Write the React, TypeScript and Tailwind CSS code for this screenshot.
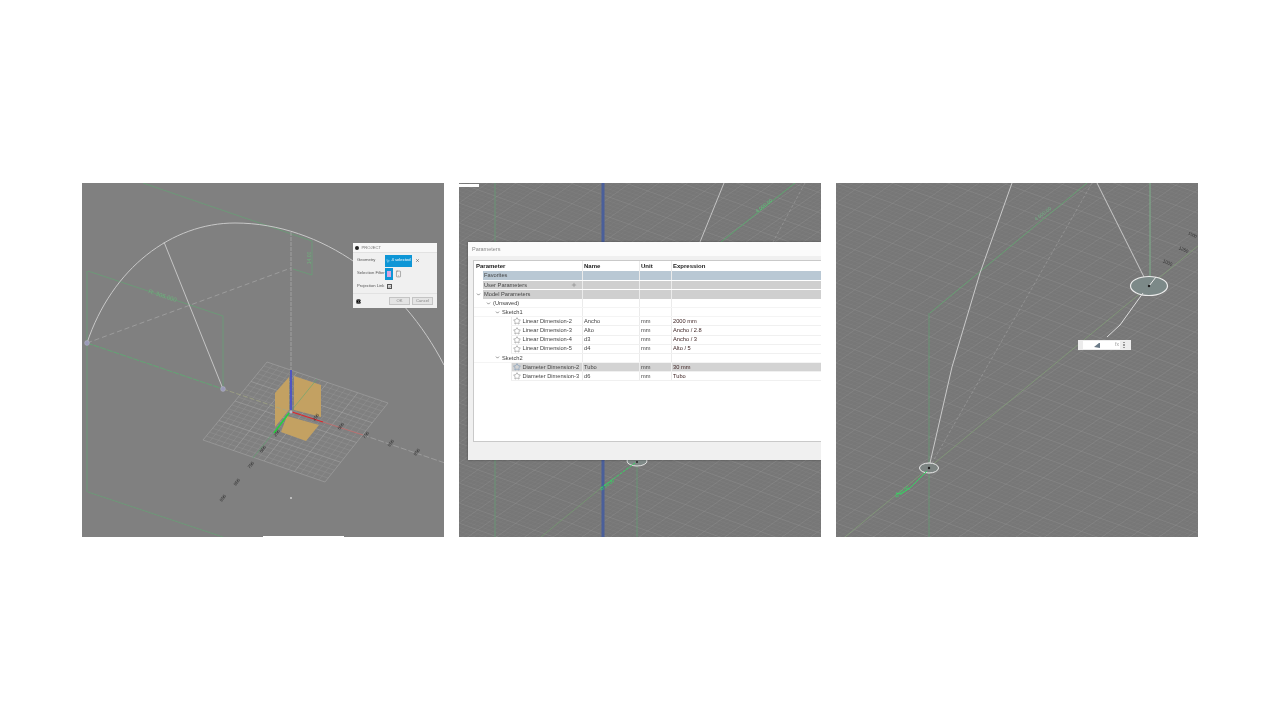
import React from 'react';
import { Star, Plus, ChevronDown, MousePointer2, X, Info, Check, Smartphone } from 'lucide-react';

const W = 362;
const H = 354;

const range = (from: number, to: number, step: number) => {
  const out: number[] = [];
  for (let v = from; v <= to; v += step) out.push(v);
  return out;
};

// sketch grid: two line families clipped by the svg
const FloorGrid = () => (
  <g>
    {range(-300, 700, 4).map((y) => (
      <line key={`a${y}`} x1={0} y1={y} x2={W} y2={y - W * 0.7} stroke="#929292" strokeWidth="0.5" opacity="0.35" />
    ))}
    {range(-200, 400, 4).map((y) => (
      <line key={`b${y}`} x1={0} y1={y} x2={W} y2={y + W * 0.36} stroke="#929292" strokeWidth="0.5" opacity="0.35" />
    ))}
    {range(-300, 700, 20).map((y) => (
      <line key={`c${y}`} x1={0} y1={y} x2={W} y2={y - W * 0.7} stroke="#a0a0a0" strokeWidth="0.5" opacity="0.4" />
    ))}
    {range(-200, 400, 20).map((y) => (
      <line key={`d${y}`} x1={0} y1={y} x2={W} y2={y + W * 0.36} stroke="#a0a0a0" strokeWidth="0.5" opacity="0.4" />
    ))}
  </g>
);

const lerp = (a: number[], b: number[], t: number) => [a[0] + (b[0] - a[0]) * t, a[1] + (b[1] - a[1]) * t];

const PlaneGrid = () => {
  const top = [185, 179];
  const right = [306, 220];
  const bottom = [243, 299];
  const left = [121, 257];
  return (
    <g>
      {range(0, 20, 1).map((i) => {
        const t = i / 20;
        const a = lerp(top, right, t);
        const b = lerp(left, bottom, t);
        const c = lerp(top, left, t);
        const d = lerp(right, bottom, t);
        const major = i % 5 === 0;
        return (
          <g key={i} stroke="#adadad" strokeWidth={major ? 0.6 : 0.4} opacity={major ? 0.8 : 0.5}>
            <line x1={a[0]} y1={a[1]} x2={b[0]} y2={b[1]} />
            <line x1={c[0]} y1={c[1]} x2={d[0]} y2={d[1]} />
          </g>
        );
      })}
    </g>
  );
};

const TickLabel = ({ x, y, t }: { x: number; y: number; t: string }) => (
  <text
    x={x}
    y={y}
    fontSize="4.5"
    fill="#2a2a2a"
    textAnchor="middle"
    fontFamily="Liberation Sans, sans-serif"
    transform={`rotate(-52 ${x} ${y})`}
  >
    {t}
  </text>
);

const ProjectDialog = () => (
  <div className="absolute left-[271px] top-[60px] w-[84px] h-[65px] bg-[#f0f0f0] flex flex-col text-[4.2px] text-[#555] whitespace-nowrap">
    <div className="h-[10px] bg-[#f7f7f7] flex items-center gap-[3px] pl-[2px] pt-[1px] border-b border-[#e2e2e2]">
      <span className="w-[3.5px] h-[3.5px] rounded-full bg-[#222]" />
      <span className="text-[#777]">PROJECT</span>
    </div>
    <div className="flex-1 flex flex-col px-[4px] pt-[1px]">
      <div className="flex items-center h-[13px]">
        <span className="w-[28px]">Geometry</span>
        <div className="w-[27px] h-[12px] bg-[#0e96d6] flex items-center justify-center gap-[1px] text-white">
          <MousePointer2 className="w-[4px] h-[4px]" />
          <span>4 selected</span>
        </div>
        <X className="w-[5px] h-[5px] ml-[3px] text-[#333]" />
      </div>
      <div className="flex items-center h-[13px]">
        <span className="w-[28px]">Selection Filter</span>
        <div className="w-[8px] h-[12px] bg-[#0e96d6] flex items-center justify-center">
          <span className="w-[4px] h-[6px] bg-[#d9a6e0]" />
        </div>
        <Smartphone className="w-[7px] h-[8px] ml-[2px] text-[#555]" strokeWidth={1.5} />
      </div>
      <div className="flex items-center h-[13px]">
        <span className="w-[30px]">Projection Link</span>
        <div className="w-[5px] h-[5px] border-[0.5px] border-[#555] bg-[#d8d8d8] flex items-center justify-center">
          <Check className="w-[4px] h-[4px] text-[#444]" strokeWidth={3} />
        </div>
      </div>
    </div>
    <div className="h-[15px] border-t border-[#e2e2e2] flex items-center px-[3px]">
      <Info className="w-[5px] h-[5px] text-white bg-black rounded-full" />
      <div className="ml-auto flex gap-[2px] pr-[1px]">
        <span className="w-[21px] h-[8px] bg-[#e4e4e4] border-[0.5px] border-[#c4c4c4] flex items-center justify-center text-[#888]">OK</span>
        <span className="w-[21px] h-[8px] bg-[#e4e4e4] border-[0.5px] border-[#c4c4c4] flex items-center justify-center text-[#888]">Cancel</span>
      </div>
    </div>
  </div>
);

const ProjectPanel = () => (
  <div className="relative w-[362px] h-[354px] bg-[#808080] overflow-hidden blur-[0.4px]">
    <svg className="absolute inset-0" width={W} height={H} fill="none">
      <PlaneGrid />
      <path d="M193 210 L207 194 L207 227 L193 244 Z M212 193 L239 202 L239 234 L212 227 Z M205 233 L237 242 L224 258 L199 249 Z" fill="#c3a162" />

      <g stroke="#5fa872" strokeWidth="0.6">
        <line x1="61" y1="0" x2="230" y2="58" />
        <line x1="6" y1="88" x2="141" y2="133" />
        <line x1="141" y1="133" x2="141" y2="206" />
        <line x1="5" y1="160" x2="141" y2="206" strokeWidth="0.9" strokeDasharray="6 1" />
        <line x1="5" y1="88" x2="5" y2="309" />
        <line x1="6" y1="309" x2="141" y2="354" />
        <path d="M211 86 L230 92 L230 58" />
        <line x1="235" y1="196" x2="171" y2="275" />
      </g>
      <line x1="141" y1="206" x2="209" y2="229" stroke="#a3a884" strokeWidth="0.7" strokeDasharray="5 2" />

      <path d="M5 160 C30 85 90 40 153 40 C240 40 320 100 362 182" stroke="#c8c8c8" strokeWidth="1" />
      <line x1="82" y1="59" x2="141" y2="206" stroke="#c4c4c4" strokeWidth="1" />
      <line x1="5" y1="160" x2="209" y2="85" stroke="#a8a8a8" strokeWidth="0.7" strokeDasharray="5 3" />
      <line x1="209" y1="49" x2="209" y2="229" stroke="#a0a0a0" strokeWidth="1" strokeDasharray="4 1" />
      <line x1="281" y1="252" x2="363" y2="280" stroke="#a8a8a8" strokeWidth="0.7" strokeDasharray="6 2" />

      <line x1="209" y1="187" x2="209" y2="227" stroke="#4a50c8" strokeWidth="1.8" />
      <line x1="210" y1="229" x2="241" y2="239" stroke="#e0262b" strokeWidth="1.2" />
      <line x1="241" y1="239" x2="281" y2="252" stroke="#c46a6a" strokeWidth="0.8" />
      <line x1="207" y1="230" x2="192" y2="250" stroke="#22d43a" strokeWidth="1.4" />

      <circle cx="5" cy="160" r="2.4" fill="#9a9ab8" stroke="#b4b4c4" strokeWidth="0.5" />
      <circle cx="141" cy="206" r="2.4" fill="#9a9ab8" stroke="#b4b4c4" strokeWidth="0.5" />
      <circle cx="209" cy="229" r="1.5" fill="#b8b8c8" />
      <rect x="208" y="314" width="2" height="2" fill="#bdbdbd" />

      <text x="66" y="110" fontSize="6" fill="#6fae7c" fontFamily="Liberation Sans, sans-serif" transform="rotate(18 66 110)">R: 305.000</text>
      <text x="229" y="75" fontSize="5" fill="#6fae7c" fontFamily="Liberation Sans, sans-serif" transform="rotate(-90 229 75)" textAnchor="middle">14.00</text>

      <TickLabel x={235} y={235} t="250" />
      <TickLabel x={260} y={244} t="500" />
      <TickLabel x={285} y={253} t="750" />
      <TickLabel x={310} y={261} t="900" />
      <TickLabel x={336} y={270} t="950" />
      <TickLabel x={196} y={251} t="250" />
      <TickLabel x={182} y={267} t="500" />
      <TickLabel x={170} y={283} t="750" />
      <TickLabel x={156} y={300} t="900" />
      <TickLabel x={142} y={316} t="950" />
    </svg>
    <ProjectDialog />
    <div className="absolute left-[181px] bottom-0 w-[81px] h-[1.5px] bg-white" />
  </div>
);

type ParamRow = {
  label: string;
  name?: string;
  unit?: string;
  expr?: string;
  level: 'group' | 'tree' | 'leaf';
  indent?: string;
  bg?: string;
  chevron?: boolean;
  selected?: boolean;
};

const rows: ParamRow[] = [
  { label: 'Favorites', level: 'group', bg: 'bg-[#b9c8d4]' },
  { label: 'User Parameters', level: 'group', bg: 'bg-[#cfcfcf]' },
  { label: 'Model Parameters', level: 'group', bg: 'bg-[#cfcfcf]', chevron: true },
  { label: '(Unsaved)', level: 'tree', indent: 'pl-[12px]' },
  { label: 'Sketch1', level: 'tree', indent: 'pl-[21px]' },
  { label: 'Linear Dimension-2', name: 'Ancho', unit: 'mm', expr: '2000 mm', level: 'leaf' },
  { label: 'Linear Dimension-3', name: 'Alto', unit: 'mm', expr: 'Ancho / 2.8', level: 'leaf' },
  { label: 'Linear Dimension-4', name: 'd3', unit: 'mm', expr: 'Ancho / 3', level: 'leaf' },
  { label: 'Linear Dimension-5', name: 'd4', unit: 'mm', expr: 'Alto / 5', level: 'leaf' },
  { label: 'Sketch2', level: 'tree', indent: 'pl-[21px]' },
  { label: 'Diameter Dimension-2', name: 'Tubo', unit: 'mm', expr: '30 mm', level: 'leaf', selected: true },
  { label: 'Diameter Dimension-3', name: 'd6', unit: 'mm', expr: 'Tubo', level: 'leaf' },
];

const Cell = ({ width, children }: { width: string; children?: React.ReactNode }) => (
  <div className={`${width} h-full shrink-0 flex items-center pl-[1px] border-l border-[#ebebeb]`}>{children}</div>
);

const TableRow = ({ row }: { row: ParamRow }) => {
  const fill = row.selected ? 'bg-[#d3d3d3]' : row.bg ?? '';
  if (row.level === 'group') {
    return (
      <div className="flex h-[9.4px] items-center">
        <div className="w-[9px] shrink-0 flex items-center justify-center">
          {row.chevron && <ChevronDown className="w-[5px] h-[5px] text-[#333]" strokeWidth={2.5} />}
        </div>
        <div className={`flex flex-1 h-[8.8px] ${fill}`}>
          <div className="w-[99px] shrink-0 flex items-center pl-[1px] justify-between pr-[5px]">
            <span>{row.label}</span>
            {row.label === 'User Parameters' && <Plus className="w-[6px] h-[6px] text-[#777]" />}
          </div>
          <Cell width="w-[57px]" />
          <Cell width="w-[32px]" />
          <Cell width="w-[150px]" />
        </div>
      </div>
    );
  }
  if (row.level === 'tree') {
    return (
      <div className="flex h-[9.1px] items-center border-b border-[#f4f4f4]">
        <div className={`w-[108px] shrink-0 flex items-center gap-[2px] ${row.indent}`}>
          <ChevronDown className="w-[5px] h-[5px] text-[#333]" strokeWidth={2.5} />
          <span>{row.label}</span>
        </div>
        <Cell width="w-[57px]" />
        <Cell width="w-[32px]" />
        <Cell width="w-[150px]" />
      </div>
    );
  }
  return (
    <div className="flex h-[9.1px] items-center">
      <div className="w-[37px] shrink-0" />
      <div className={`flex flex-1 h-full items-center border-b border-[#f0f0f0] ${fill}`}>
        <div className="w-[71px] shrink-0 flex items-center gap-[1.5px] pl-[1px] border-l border-[#ebebeb] h-full whitespace-nowrap">
          <Star
            className={`w-[8px] h-[8px] shrink-0 ${row.selected ? 'text-[#5f86b0]' : 'text-[#666]'}`}
            strokeWidth={1.4}
          />
          <span>{row.label}</span>
        </div>
        <Cell width="w-[57px]"><span>{row.name}</span></Cell>
        <Cell width="w-[32px]"><span>{row.unit}</span></Cell>
        <Cell width="w-[150px]"><span className="text-[#3a1f1f]">{row.expr}</span></Cell>
      </div>
    </div>
  );
};

const ParametersDialog = () => (
  <div className="absolute left-[9px] top-[59px] w-[353px] h-[218px] bg-[#f0f0f0] flex flex-col shadow-[0_0_2px_rgba(0,0,0,0.4)]">
    <div className="h-[14px] bg-[#fbfbfb] flex items-center pl-[4px] text-[5.5px] text-[#8a8a8a]">Parameters</div>
    <div className="ml-[5px] mt-[4px] w-[360px] h-[182px] bg-white border border-[#c9c9c9] text-[5.7px] text-[#444] overflow-hidden">
      <div className="flex h-[10px] items-center font-bold text-[6px] text-[#222]">
        <div className="w-[108px] shrink-0 pl-[2px]">Parameter</div>
        <Cell width="w-[57px]">Name</Cell>
        <Cell width="w-[32px]">Unit</Cell>
        <Cell width="w-[150px]">Expression</Cell>
      </div>
      {rows.map((r) => (
        <TableRow key={r.label} row={r} />
      ))}
    </div>
  </div>
);

const ParametersPanel = () => (
  <div className="relative w-[362px] h-[354px] bg-[#777777] overflow-hidden blur-[0.4px]">
    <svg className="absolute inset-0" width={W} height={H} fill="none">
      <FloorGrid />
      <line x1="36" y1="0" x2="36" y2="354" stroke="#5fa872" strokeWidth="0.6" />
      <line x1="336" y1="0" x2="262" y2="59" stroke="#55b06c" strokeWidth="0.8" />
      <line x1="265" y1="0" x2="241" y2="59" stroke="#c4c4c4" strokeWidth="1" />
      <line x1="346" y1="0" x2="314" y2="59" stroke="#a8a8a8" strokeWidth="0.5" strokeDasharray="3 2" />
      <text x="306" y="24" fontSize="5" fill="#5ec97a" fontFamily="Liberation Sans, sans-serif" transform="rotate(-38 306 24)" textAnchor="middle">4 000.00</text>
      <line x1="144" y1="0" x2="144" y2="354" stroke="#4a5f9a" strokeWidth="3" />
      <line x1="178" y1="276" x2="178" y2="354" stroke="#5fa872" strokeWidth="0.6" />
      <ellipse cx="178" cy="278" rx="10" ry="5" fill="#808a88" stroke="#e2e2e2" strokeWidth="1" />
      <circle cx="178" cy="279" r="1" fill="#222" />
      <line x1="176" y1="280" x2="142" y2="305" stroke="#2fdc60" strokeWidth="0.9" strokeDasharray="3 1" />
      <line x1="142" y1="305" x2="82" y2="354" stroke="#74a56f" strokeWidth="0.6" />
      <text x="149" y="303" fontSize="4.5" fill="#2fdc60" fontFamily="Liberation Sans, sans-serif" transform="rotate(-36 149 303)" textAnchor="middle">Ø 30.00</text>
    </svg>
    <div className="absolute left-0 top-[1px] w-[20px] h-[2.5px] bg-white" />
    <ParametersDialog />
  </div>
);

const SketchPanel = () => (
  <div className="relative w-[362px] h-[354px] bg-[#777777] overflow-hidden blur-[0.4px]">
    <svg className="absolute inset-0" width={W} height={H} fill="none">
      <FloorGrid />
      <line x1="363" y1="62" x2="9" y2="354" stroke="#84a877" strokeWidth="0.6" />
      <line x1="251" y1="0" x2="94" y2="130" stroke="#5fb070" strokeWidth="0.7" />
      <line x1="93" y1="130" x2="93" y2="354" stroke="#5fa872" strokeWidth="0.6" />
      <line x1="314" y1="0" x2="314" y2="97" stroke="#7fb18b" strokeWidth="1" />
      <path d="M176 0 L144 90 L116 184 L94 280" stroke="#c9c9c9" strokeWidth="1" />
      <line x1="256" y1="0" x2="96" y2="280" stroke="#a8a8a8" strokeWidth="0.5" strokeDasharray="3 2" />
      <line x1="261" y1="0" x2="311" y2="100" stroke="#c9c9c9" strokeWidth="1" />
      <ellipse cx="313" cy="103" rx="18.5" ry="9.5" fill="#7c8988" stroke="#ececec" strokeWidth="1.2" />
      <line x1="313" y1="103" x2="320" y2="94" stroke="#ececec" strokeWidth="1" />
      <circle cx="313" cy="103" r="1.2" fill="#1c1c1c" />
      <path d="M307 110 L284 142 L271 154" stroke="#dcdcdc" strokeWidth="1" />
      <ellipse cx="93" cy="285" rx="9.5" ry="5" fill="#7c8482" stroke="#ececec" strokeWidth="1" />
      <circle cx="93" cy="285" r="1.2" fill="#1c1c1c" />
      <path d="M91 288 L74 305 L65 311 L60 310" stroke="#2fdc60" strokeWidth="0.9" />
      <text x="67" y="310" fontSize="4.5" fill="#2fdc60" fontFamily="Liberation Sans, sans-serif" transform="rotate(-36 67 310)" textAnchor="middle">Ø 30.00</text>
      <text x="208" y="32" fontSize="5" fill="#71b584" fontFamily="Liberation Sans, sans-serif" transform="rotate(-38 208 32)" textAnchor="middle">4 000.00</text>
      <text x="331" y="81" fontSize="4.5" fill="#2a2a2a" fontFamily="Liberation Sans, sans-serif" transform="rotate(25 331 81)" textAnchor="middle">1000</text>
      <text x="347" y="68" fontSize="4.5" fill="#2a2a2a" fontFamily="Liberation Sans, sans-serif" transform="rotate(25 347 68)" textAnchor="middle">1250</text>
      <text x="356" y="53" fontSize="4" fill="#2a2a2a" fontFamily="Liberation Sans, sans-serif" transform="rotate(25 356 53)" textAnchor="middle">1500</text>
    </svg>
    {/* dimension input */}
    <div className="absolute left-[242px] top-[157px] w-[53px] h-[10px] bg-[#ececec] flex items-center">
      <div className="w-[5px]" />
      <div className="w-[37px] h-[8px] bg-white flex items-center justify-between pr-[1px] pl-[11px]">
        <svg width="7" height="6" viewBox="0 0 7 6">
          <path d="M0 5 L5 1 L6 1 L6 6 Z" fill="#6b7a88" />
        </svg>
        <span className="text-[5px] text-[#999]">fx</span>
      </div>
      <div className="ml-[3px] flex flex-col gap-[1px]">
        <span className="w-[2px] h-[1.5px] bg-[#999]" />
        <span className="w-[2px] h-[1.5px] bg-[#999]" />
        <span className="w-[2px] h-[1.5px] bg-[#999]" />
      </div>
    </div>
  </div>
);

export default function App() {
  return (
    <div className="w-[1280px] h-[720px] bg-white overflow-hidden pt-[183px] pl-[82px] font-['Liberation_Sans',sans-serif]">
      <div className="flex gap-[15px]">
        <ProjectPanel />
        <ParametersPanel />
        <SketchPanel />
      </div>
    </div>
  );
}
